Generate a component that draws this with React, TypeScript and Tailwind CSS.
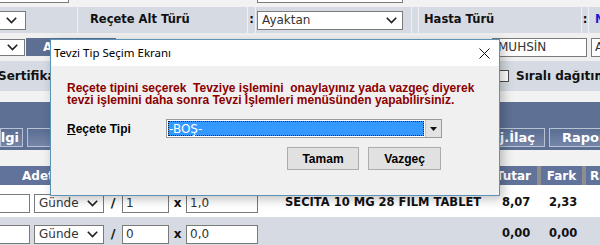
import React from 'react';

function Chevron() {
  return (
    <svg width="11" height="7" viewBox="0 0 11 7" className="shrink-0">
      <path d="M0.8 0.8 L5.5 5.6 L10.2 0.8" fill="none" stroke="#1f1f1f" strokeWidth="1.6" />
    </svg>
  );
}

function Select({ text, className }: { text: string; className: string }) {
  return (
    <div
      className={`flex items-center justify-between bg-white border border-[#7a7a7a] pl-[4px] pr-[5px] text-[12px] text-[#333] ${className}`}
    >
      <span>{text}</span>
      <Chevron />
    </div>
  );
}

function Input({ text, className }: { text: string; className: string }) {
  return (
    <div className={`flex items-center bg-white border border-[#7a7a7a] pl-[3px] text-[12px] text-[#333] overflow-hidden whitespace-nowrap ${className}`}>
      {text}
    </div>
  );
}

function BandButton({ label, className }: { label: string; className: string }) {
  return (
    <div
      className={`h-[19px] shrink-0 overflow-hidden flex items-center whitespace-nowrap bg-gradient-to-b from-[#5a6d92] to-[#7586a8] border border-[#b9c2d3] text-white font-bold text-[13px] ${className}`}
    >
      {label}
    </div>
  );
}

function DoseRow({ count, per, name, tutar, fark, className }: {
  count: string; per: string; name: string; tutar: string; fark: string; className: string;
}) {
  return (
    <div className={`flex items-center text-[12px] ${className}`}>
      <Input text="" className="w-[31px] h-[19px] -ml-[1px] shrink-0" />
      <Select text="Günde" className="w-[70px] h-[19px] ml-[4px] shrink-0" />
      <div className="w-[18px] shrink-0 text-center font-bold text-[13px]">/</div>
      <Input text={count} className="w-[47px] h-[19px] shrink-0" />
      <div className="w-[17px] shrink-0 text-center font-bold text-[12px]">x</div>
      <Input text={per} className="w-[72px] h-[19px] shrink-0" />
      <div className="w-[241px] shrink-0 pl-[27px] font-bold text-[11.5px] whitespace-nowrap">{name}</div>
      <div className="w-[44px] shrink-0 pl-[3px] font-bold text-[11.5px]">{tutar}</div>
      <div className="w-[45px] shrink-0 pl-[6px] font-bold text-[11.5px]">{fark}</div>
    </div>
  );
}

export default function App() {
  return (
    <div className="w-[600px] h-[245px] relative overflow-hidden bg-[#f2f2f2] font-['DejaVu_Sans',sans-serif] text-[#111]">
      {/* top row remnants */}
      <div className="h-[7px] flex">
        <div className="w-[69px] h-[3px] shrink-0 bg-white border-b border-r border-[#7a7a7a]" />
        <div className="w-[188px] shrink-0" />
        <div className="w-[146px] h-[3px] shrink-0 bg-white border-b border-x border-[#7a7a7a]" />
      </div>

      {/* Reçete Alt Türü row */}
      <div className="h-[26px] flex items-center bg-[#d5dae3] overflow-hidden">
        <div className="w-[78px] shrink-0 h-full flex items-center border-r border-[#edf0f4]">
          <div className="w-[26px] h-[19px] bg-white border border-l-0 border-[#7a7a7a] flex items-center justify-end pr-[8px]">
            <Chevron />
          </div>
        </div>
        <div className="w-[170px] shrink-0 h-full flex items-center pl-[12px] font-bold text-[11.5px] border-r border-[#edf0f4]">
          Reçete Alt Türü
        </div>
        <div className="w-[8px] shrink-0 h-full flex items-center justify-center font-bold text-[11.5px] border-r border-[#edf0f4]">:</div>
        <div className="w-[156px] shrink-0 h-full flex items-center pl-[1px] border-r border-[#edf0f4]">
          <Select text="Ayaktan" className="w-[146px] h-[19px]" />
        </div>
        <div className="w-[7px] shrink-0 h-full border-r border-[#edf0f4]" />
        <div className="w-[163px] shrink-0 h-full flex items-center pl-[5px] font-bold text-[11.5px] border-r border-[#edf0f4]">
          Hasta Türü
        </div>
        <div className="w-[7px] shrink-0 h-full flex items-center justify-center font-bold text-[11.5px] border-r border-[#edf0f4]">:</div>
        <div className="w-[60px] shrink-0 h-full flex items-center pl-[6px] font-bold text-[11.5px] text-[#1a1ad6] whitespace-nowrap">Normal</div>
      </div>

      {/* hekim row */}
      <div className="h-[28px] flex items-center bg-[#f0f0f0] overflow-hidden">
        <div className="w-[25px] h-[17px] bg-white border border-l-0 border-[#7a7a7a] flex items-center justify-end pr-[6px] shrink-0">
          <Chevron />
        </div>
        <div className="w-[90px] h-[18px] ml-[1px] bg-[#5d6f92] text-white font-bold text-[12px] flex items-center pl-[17px] shrink-0">
          Ara
        </div>
        <div className="w-[376px] shrink-0" />
        <Input text="MUHSİN" className="w-[95px] h-[19px] pl-[5px] shrink-0" />
        <Input text="AKIN" className="w-[40px] h-[19px] ml-[4px] shrink-0" />
      </div>

      {/* Sertifika row */}
      <div className="h-[30px] flex items-center bg-[#d5dae3] overflow-hidden">
        <div className="-ml-[2px] w-[420px] shrink-0 font-bold text-[12px]">Sertifika</div>
        <div className="w-[79px] shrink-0" />
        <div className="w-[12px] h-[12px] bg-white border border-[#4b4b4b] shrink-0" />
        <div className="ml-[7px] shrink-0 font-bold text-[12px] whitespace-nowrap">Sıralı dağıtım</div>
      </div>

      <div className="h-[11px] bg-[#f2f2f2]" />

      {/* action band */}
      <div className="h-[48px] bg-[#5e7194] flex items-start pt-[26px] gap-[4px] overflow-hidden">
        <BandButton label="Bilgi" className="w-[23px] justify-end pr-[3px]" />
        <BandButton label="Reçete" className="w-[110px] justify-center" />
        <BandButton label="İlaç Ekle" className="w-[110px] justify-center" />
        <BandButton label="Sil" className="w-[110px] justify-center" />
        <BandButton label="Eşdeğer" className="w-[102px] justify-center" />
        <BandButton label="Maj.İlaç" className="w-[70px] justify-end pr-[9px]" />
        <BandButton label="Rapor" className="w-[80px] pl-[12px]" />
      </div>

      <div className="h-[16px] bg-[#f2f2f2]" />

      {/* table header */}
      <div className="h-[19px] flex gap-[4px] bg-[#8e8e8e] overflow-hidden text-white font-bold text-[12px]">
        <div className="w-[104px] shrink-0 bg-[#61739a] flex items-center pl-[22px]">Adet</div>
        <div className="w-[150px] shrink-0 bg-[#61739a]" />
        <div className="w-[190px] shrink-0 bg-[#61739a] flex items-center justify-center">İlaç Adı</div>
        <div className="w-[81px] shrink-0 bg-[#61739a] flex items-center justify-end pr-[6px]">Tutar</div>
        <div className="w-[41px] shrink-0 bg-[#61739a] flex items-center justify-center">Fark</div>
        <div className="w-[60px] shrink-0 bg-[#61739a] flex items-center pl-[4px]">Rapor</div>
      </div>

      <DoseRow
        count="1"
        per="1,0"
        name="SECITA 10 MG 28 FILM TABLET"
        tutar="8,07"
        fark="2,33"
        className="h-[32px] bg-white pt-[4px]"
      />
      <DoseRow
        count="0"
        per="0,0"
        name=""
        tutar="0,00"
        fark="0,00"
        className="h-[28px] bg-[#d5dae3] pt-[6px]"
      />

      {/* modal dialog */}
      <div className="absolute left-[50px] top-[39px] w-[450px] h-[157px] flex flex-col bg-[#f0f0f0] border border-[#5b93b6] shadow-[3px_3px_10px_rgba(0,0,0,0.25)]">
        <div className="h-[26px] bg-white flex items-center justify-between pl-[3px] pr-[9px] font-['Noto_Sans',sans-serif] text-[11.5px] text-black">
          <span>Tevzi Tip Seçim Ekranı</span>
          <svg width="11" height="11" viewBox="0 0 11 11">
            <path d="M0.5 0.5 L10.5 10.5 M10.5 0.5 L0.5 10.5" stroke="#111" strokeWidth="1" />
          </svg>
        </div>
        <div className="flex flex-col pl-[16px] pt-[16px] font-['Liberation_Sans',sans-serif]">
          <div className="text-[#8b0000] font-bold text-[12px] leading-[12px] whitespace-pre">
            {'Reçete tipini seçerek  Tevziye işlemini  onaylayınız yada vazgeç diyerek\ntevzi işlemini daha sonra Tevzi İşlemleri menüsünden yapabilirsiniz.'}
          </div>
          <div className="flex items-center mt-[13px]">
            <div className="w-[99px] font-bold text-[12px] text-black">
              <span className="underline">R</span>eçete Tipi
            </div>
            <div className="w-[276px] h-[19px] flex bg-white border border-[#9a9a9a]">
              <div className="flex-1 m-[1px] bg-[#3399ff] border border-dotted border-[#222] flex items-center text-white text-[12px] font-['DejaVu_Sans',sans-serif]">
                -BOŞ-
              </div>
              <div className="w-[16px] bg-[#e3e3e3] border-l border-[#c4c4c4] flex items-center justify-center">
                <svg width="7" height="4" viewBox="0 0 7 4">
                  <path d="M0 0 H7 L3.5 4 Z" fill="#111" />
                </svg>
              </div>
            </div>
          </div>
          <div className="flex mt-[9px] ml-[220px] gap-[9px]">
            <div className="w-[72px] h-[23px] bg-[#e1e1e1] border border-[#adadad] flex items-center justify-center font-bold text-[12px] text-black">
              Tamam
            </div>
            <div className="w-[73px] h-[23px] bg-[#e1e1e1] border border-[#adadad] flex items-center justify-center font-bold text-[12px] text-black">
              Vazgeç
            </div>
          </div>
        </div>
      </div>
    </div>
  );
}
